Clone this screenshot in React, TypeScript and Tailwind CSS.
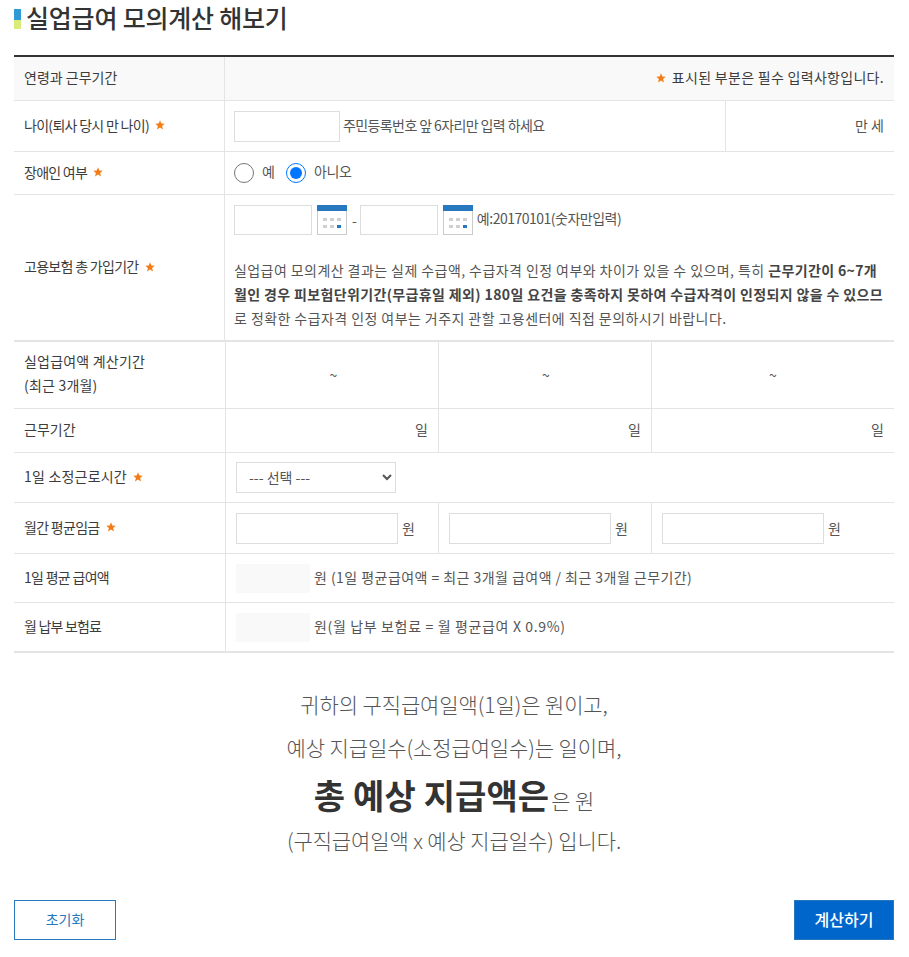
const StarIcon = ({ className }: { className?: string }) => (
  <svg width="10" height="10" viewBox="0 0 10 10" className={`shrink-0 ${className}`}>
    <path d="M5 .3 6.3 3.5 9.7 3.8 7.1 6 8 9.5 5 7.6 2 9.5 2.9 6 .3 3.8 3.7 3.5Z" fill="#f57c14" />
  </svg>
);

const Calendar = () => (
  <svg width="30" height="30" viewBox="0 0 30 30" className="shrink-0">
    <rect x="0.5" y="0.5" width="29" height="29" fill="#fff" stroke="#ccc" />
    <rect x="0" y="0" width="30" height="6" fill="#2878c0" />
    <rect x="6" y="13" width="4" height="3" fill="#d0d0d0" />
    <rect x="13" y="13" width="4" height="3" fill="#d0d0d0" />
    <rect x="20" y="13" width="4" height="3" fill="#d0d0d0" />
    <rect x="6" y="20" width="4" height="3" fill="#d0d0d0" />
    <rect x="13" y="20" width="4" height="3" fill="#d0d0d0" />
    <rect x="20" y="20" width="4" height="3" fill="#2878c0" />
  </svg>
);

// label column is 1px narrower in the upper block
const Row = ({ label, star, labelClass, className, children }: { label: React.ReactNode; star?: boolean; labelClass?: string; className?: string; children: React.ReactNode }) => (
  <div className={`flex border-b border-[#e4e4e4] ${className}`}>
    <div className={`shrink-0 flex items-center px-[10px] border-r border-[#e4e4e4] text-[#3c3c3c] ${labelClass}`}>
      <span className="-translate-y-px">{label}</span>
      {star && <StarIcon className="ml-[6px] -translate-y-px" />}
    </div>
    <div className="flex-1 min-w-0 flex">{children}</div>
  </div>
);

const Input = ({ className }: { className: string }) => (
  <input type="text" className={`border border-[#ddd] bg-white shrink-0 ${className}`} />
);

export default function App() {
  return (
    <div className="w-[909px] h-[957px] bg-white pl-[14px] pr-[15px] text-[14px] text-[#555] font-['Noto_Sans_CJK_KR','Noto_Sans',sans-serif]">
      {/* Title */}
      <div className="h-[55px] flex items-start">
        <div className="w-[7px] h-5 mt-[9px] mr-[5px] flex flex-col">
          <div className="h-[11px] bg-[#2e9bd6]" />
          <div className="h-[9px] bg-[#d9ec77]" />
        </div>
        <h1 className="text-[25px] leading-[34px] font-medium tracking-[-0.2px] text-[#333]">실업급여 모의계산 해보기</h1>
      </div>

      {/* Form table */}
      <div className="border-t-2 border-[#333]">
        <Row label="연령과 근무기간" labelClass="w-[211px]" className="h-[44px] bg-[#f9f9f9]">
          <div className="flex-1 flex items-center justify-end pr-[10px] text-[#3c3c3c] tracking-[0.3px]">
            <StarIcon className="mr-[6px] -translate-y-px" /><span className="-translate-y-px">표시된 부분은 필수 입력사항입니다.</span>
          </div>
        </Row>
        <Row label="나이(퇴사 당시 만 나이)" star labelClass="w-[211px] tracking-[-0.7px]" className="h-[51px]">
          <div className="flex-1 flex items-center pl-[9px] border-r border-[#e4e4e4]">
            <Input className="w-[106px] h-[31px]" />
            <span className="ml-[3px] tracking-[-0.6px] -translate-y-px">주민등록번호 앞 6자리만 입력 하세요</span>
          </div>
          <div className="w-[168px] flex items-center justify-end pr-[10px]"><span className="-translate-y-px">만 세</span></div>
        </Row>
        <Row label="장애인 여부" star labelClass="w-[211px] tracking-[-0.75px]" className="h-[43px]">
          <div className="flex items-center pl-[9px]">
            <input type="radio" name="disabled" className="w-5 h-5 m-0" />
            <span className="ml-2 mr-[11px] -mt-1">예</span>
            <input type="radio" name="disabled" defaultChecked className="w-5 h-5 m-0" />
            <span className="ml-2 -mt-1 tracking-[-0.3px]">아니오</span>
          </div>
        </Row>
        <Row label="고용보험 총 가입기간" star labelClass="w-[211px] tracking-[-0.7px]" className="h-[147px] border-b-2">
          <div className="pl-[9px] pt-[10px] pr-[10px] min-w-0">
            <div className="flex items-center">
              <Input className="w-[78px] h-[30px]" />
              <span className="ml-[5px]"><Calendar /></span>
              <span className="ml-[5px] mr-[3px]">-</span>
              <Input className="w-[78px] h-[30px]" />
              <span className="ml-[5px]"><Calendar /></span>
              <span className="ml-[4px] -mt-[4px] tracking-[-0.5px]">예:20170101(숫자만입력)</span>
            </div>
            <p className="mt-[23px] leading-[24px] tracking-[0.43px] break-all">
              실업급여 모의계산 결과는 실제 수급액, 수급자격 인정 여부와 차이가 있을 수 있으며, 특히{" "}
              <b className="font-bold text-[#444] tracking-[0.36px]">근무기간이 6~7개월인 경우 피보험단위기간(무급휴일 제외) 180일 요건을 충족하지 못하여 수급자격이 인정되지 않을 수 있으므</b>
              로 정확한 수급자격 인정 여부는 거주지 관할 고용센터에 직접 문의하시기 바랍니다.
            </p>
          </div>
        </Row>
        <Row label={<span className="block leading-6 tracking-[0.2px] -translate-y-px">실업급여액 계산기간<br />(최근 3개월)</span>} labelClass="w-[212px]" className="h-[67px]">
          <div className="w-[213px] border-r border-[#e4e4e4] flex items-center justify-center pl-[3px]">~</div>
          <div className="w-[213px] border-r border-[#e4e4e4] flex items-center justify-center pl-[2px]">~</div>
          <div className="flex-1 flex items-center justify-center">~</div>
        </Row>
        <Row label="근무기간" labelClass="w-[212px]" className="h-[44px]">
          <div className="w-[213px] border-r border-[#e4e4e4] flex items-center justify-end pr-[10px]"><span className="-translate-y-px">일</span></div>
          <div className="w-[213px] border-r border-[#e4e4e4] flex items-center justify-end pr-[10px]"><span className="-translate-y-px">일</span></div>
          <div className="flex-1 flex items-center justify-end pr-[10px]"><span className="-translate-y-px">일</span></div>
        </Row>
        <Row label="1일 소정근로시간" star labelClass="w-[212px] tracking-[0.2px]" className="h-[50px]">
          <div className="flex items-center pl-[10px]">
            <select className="w-[160px] h-[31px] border border-[#ddd] bg-white pl-2 pb-[2px] text-[#555]">
              <option>--- 선택 ---</option>
            </select>
          </div>
        </Row>
        <Row label="월간 평균임금" star labelClass="w-[212px] tracking-[-0.7px]" className="h-[51px]">
          <div className="w-[213px] border-r border-[#e4e4e4] flex items-center pl-[10px]">
            <Input className="w-[162px] h-[31px]" /><span className="ml-[4px]">원</span>
          </div>
          <div className="w-[213px] border-r border-[#e4e4e4] flex items-center pl-[10px]">
            <Input className="w-[162px] h-[31px]" /><span className="ml-[4px]">원</span>
          </div>
          <div className="flex-1 flex items-center pl-[10px]">
            <Input className="w-[162px] h-[31px]" /><span className="ml-[4px]">원</span>
          </div>
        </Row>
        <Row label="1일 평균 급여액" labelClass="w-[212px] tracking-[-0.7px]" className="h-[49px]">
          <div className="flex items-center pl-[10px]">
            <div className="w-[74px] h-[29px] bg-[#f9f9f9]" />
            <span className="ml-1 tracking-[0.45px] -translate-y-px">원 (1일 평균급여액 = 최근 3개월 급여액 / 최근 3개월 근무기간)</span>
          </div>
        </Row>
        <Row label="월 납부 보험료" labelClass="w-[212px] tracking-[-0.8px]" className="h-[50px] border-b-2">
          <div className="flex items-center pl-[10px]">
            <div className="w-[74px] h-[29px] bg-[#f9f9f9]" />
            <span className="ml-1 tracking-[0.65px] -translate-y-px">원(월 납부 보험료 = 월 평균급여 X 0.9%)</span>
          </div>
        </Row>
      </div>

      {/* Result */}
      <div className="mt-[29px] flex flex-col items-center text-[21px] tracking-[-0.1px] font-light text-[#555]">
        <p className="h-[44px] leading-[44px]">귀하의 구직급여일액(1일)은 원이고,</p>
        <p className="h-[43px] leading-[43px]">예상 지급일수(소정급여일수)는 일이며,</p>
        <p className="h-[52px] leading-[52px]">
          <b className="text-[34px] font-bold tracking-[0.1px] text-[#333]">총 예상 지급액은</b>
          <span className="ml-[2px]">은 원</span>
        </p>
        <p className="h-[39px] leading-[39px]">(구직급여일액 x 예상 지급일수) 입니다.</p>
      </div>

      {/* Buttons */}
      <div className="mt-[40px] flex justify-between">
        <button className="w-[102px] h-[40px] border border-[#2878c0] bg-white pb-[2px] text-[#2878c0] text-[14px]">초기화</button>
        <button className="w-[100px] h-[40px] border border-[#2878c0] bg-[#0066cc] pb-[2px] text-white text-[16px] font-medium">계산하기</button>
      </div>
    </div>
  );
}
